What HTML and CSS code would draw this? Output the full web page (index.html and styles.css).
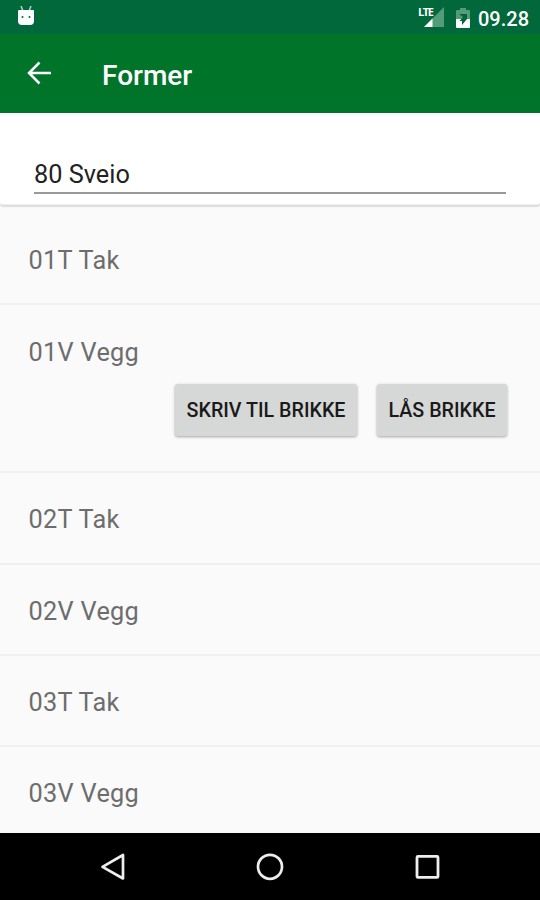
FILE: index.html
```
<!DOCTYPE html>
<html lang="no">
	<head>
		<meta charset="utf-8">
		<title>Former</title>
		<link rel="stylesheet" href="styles.css">
	</head>
	<body>
		<div class="status">
			<svg class="droid" width="18" height="21" viewBox="0 0 18 21">
				<path d="M4 0l2 5M14 0l-2 5" stroke="#b8d5c7" stroke-width="1.500"/>
				<path d="M1 5q0-1 1-1h14q1 0 1 1v10q0 4-4 4H5q-4 0-4-4z" fill="#fff"/>
				<circle cx="5.500" cy="11" r="1" fill="#00683a"/>
				<circle cx="12.500" cy="11" r="1" fill="#00683a"/>
			</svg>
			<div class="signal">
				<span class="lte">LTE</span>
				<svg width="20" height="20" viewBox="0 0 20 20">
					<path d="M20 0v20H0z" fill="#549b79"/>
					<path d="M8.500 11.500v8.500H0z" fill="#fff"/>
				</svg>
			</div>
			<svg class="battery" width="14" height="20" viewBox="0 0 14 20">
				<path d="M0 3q0-1 1-1h3V0h6v2h3q1 0 1 1v8H0z" fill="#549b79"/>
				<path d="M0 11h14v8q0 1-1 1H1q-1 0-1-1z" fill="#fff"/>
				<path d="M3 6h8v5l-5 6v-4H3.500L7 9z" fill="#00683a"/>
			</svg>
			<span class="time">09.28</span>
		</div>
		<header class="toolbar">
			<svg class="back" width="24" height="24" viewBox="0 0 24 24" fill="none" stroke="#fff" stroke-width="2.500">
				<path d="M24 12H2M12.500 1.500L2 12l10.500 10.500"/>
			</svg>
			<h1 class="title">Former</h1>
		</header>
		<div class="card">
			<div class="field">80 Sveio</div>
		</div>
		<ul class="list">
			<li class="row">01T Tak</li>
			<li class="row open">
				<span>01V Vegg</span>
				<div class="buttons">
					<button class="btn write">SKRIV TIL BRIKKE</button>
					<button class="btn lock">LÅS BRIKKE</button>
				</div>
			</li>
			<li class="row">02T Tak</li>
			<li class="row">02V Vegg</li>
			<li class="row">03T Tak</li>
			<li class="row">03V Vegg</li>
		</ul>
		<nav class="navbar">
			<svg width="28" height="30" viewBox="0 0 28 30" fill="none" stroke="#eee" stroke-width="2.700" stroke-linejoin="round">
				<path d="M24 3v23.500L3.500 14.800z"/>
			</svg>
			<svg width="28" height="30" viewBox="0 0 28 30" fill="none" stroke="#eee" stroke-width="2.700">
				<circle cx="14" cy="14.800" r="12"/>
			</svg>
			<svg width="28" height="30" viewBox="0 0 28 30" fill="none" stroke="#eee" stroke-width="2.800">
				<rect x="4" y="4.400" width="21" height="21" rx="1"/>
			</svg>
		</nav>
	</body>
</html>
```
FILE: styles.css
```
body {
	margin: 0;
	height: 900px;
	display: flex;
	flex-direction: column;
	overflow: hidden;
	background-color: #fafafa;
	font-family: Roboto, sans-serif;
}

.status {
	display: flex;
	height: 34px;
	flex: none;
	box-sizing: border-box;
	padding: 6px 11px 0 17px;
	background-color: #00683a;
	color: white;
}

.signal {
	display: flex;
	margin-left: auto;
	padding-top: 1px;
}

.lte {
	width: 6px;
	font-family: "Open Sans", sans-serif;
	font-size: 11px;
	font-weight: bold;
	line-height: 10px;
	letter-spacing: -1.4px;
}

.battery {
	margin: 2px 8px 0 12px;
}

.time {
	font-size: 20px;
	font-weight: 500;
	line-height: 26px;
}

.toolbar {
	display: flex;
	align-items: center;
	height: 79px;
	flex: none;
	background-color: #007429;
	color: white;
}

.back {
	margin: 0 51px 2px 27px;
}

.title {
	margin: 3px 0 0;
	font-size: 28px;
	font-weight: 500;
}

.card {
	height: 92px;
	flex: none;
	box-sizing: border-box;
	padding: 39px 34px 0;
	background-color: white;
	border-bottom: 1px solid #eee;
	border-radius: 0 0 3px 3px;
	box-shadow: 0 2px 1px #dedede;
}

.field {
	height: 42px;
	box-sizing: border-box;
	border-bottom: 2px solid #999;
	font-size: 25.3px;
	line-height: 46px;
	color: #222;
}

.list {
	flex: 1;
	margin: 0;
	padding: 9px 0 0;
	list-style: none;
	overflow: hidden;
}

.row {
	height: 91.3px;
	box-sizing: border-box;
	padding-left: 28.5px;
	border-bottom: 2px solid #f0f0f0;
	font-size: 25.3px;
	line-height: 94px;
	letter-spacing: .3px;
	color: #6d6d6d;
}

.open {
	height: 168px;
	line-height: 95px;
}

.open span {
	display: block;
	height: 79px;
}

.buttons {
	display: flex;
	justify-content: flex-end;
	gap: 20px;
	padding-right: 33px;
}

.btn {
	height: 52px;
	padding: 0;
	border: none;
	border-radius: 3px;
	background-color: #d6d7d7;
	box-shadow: 0 1px 3px rgba(0, 0, 0, .35);
	font-family: Roboto, sans-serif;
	font-size: 19.7px;
	font-weight: 500;
	color: #1a1a1a;
}

.write {
	width: 182px;
}

.lock {
	width: 130px;
}

.navbar {
	display: flex;
	justify-content: center;
	gap: 129px;
	height: 67px;
	flex: none;
	box-sizing: border-box;
	padding-top: 19px;
	background-color: black;
}
```
